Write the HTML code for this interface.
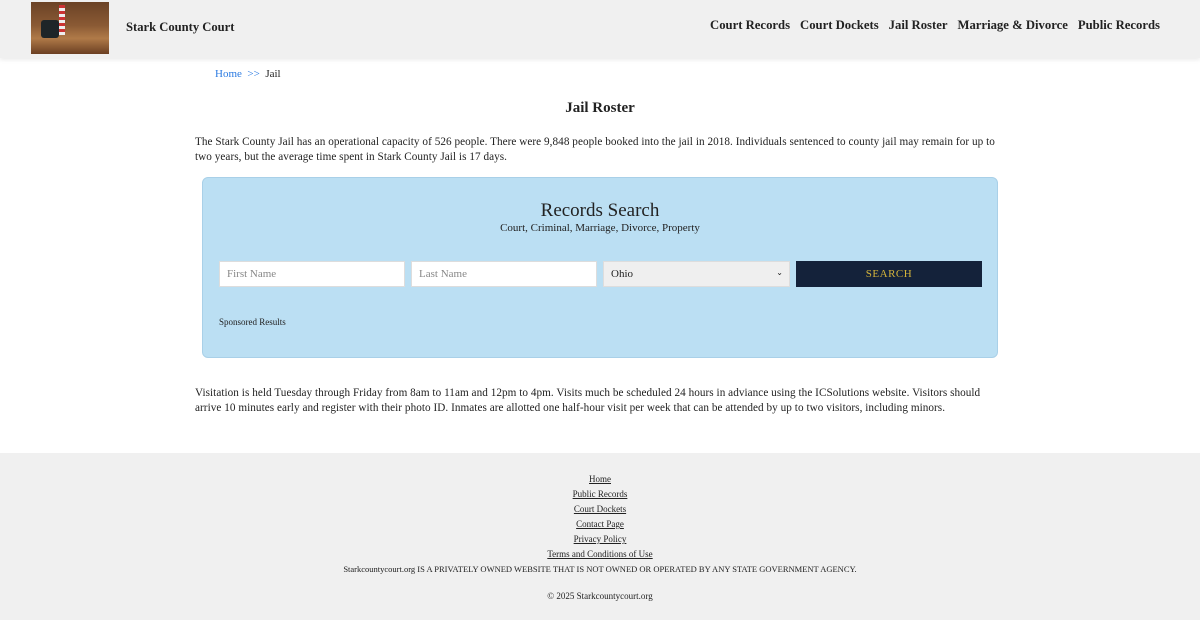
<!DOCTYPE html>
<html><head><meta charset="utf-8"><style>
*{box-sizing:border-box}
body{margin:0;width:1200px;height:620px;overflow:hidden;background:#fff;font-family:"Liberation Serif",serif;color:#222}
.hdr{height:58px;background:#f0f0f0;position:relative;box-shadow:0 2px 4px rgba(0,0,0,.08)}
.logo{position:absolute;left:31px;top:2px;width:78px;height:52px;background:linear-gradient(180deg,#6b4226 0%,#8a5a34 45%,#b07a48 70%,#6b3f22 100%)}
.logo:before{content:"";position:absolute;left:10px;top:18px;width:18px;height:18px;background:#1e2528;border-radius:3px}
.logo:after{content:"";position:absolute;left:28px;top:3px;width:6px;height:30px;background:repeating-linear-gradient(180deg,#c33 0 3px,#eee 3px 6px)}
.title{position:absolute;left:126px;top:20px;font-size:12.6px;font-weight:bold;color:#222}
.nav{position:absolute;right:40px;top:18px;font-size:12.7px;font-weight:bold}
.nav span{margin-left:10px}
.bc{position:absolute;left:215px;top:68px;font-size:11px}
.bc a{color:#2a7ae2;text-decoration:none}
h1{position:absolute;left:0;width:1200px;text-align:center;top:100px;margin:0;font-size:15px}
.p{position:absolute;left:195px;width:810px;font-size:11.2px;line-height:15px;letter-spacing:.05px}
.box{position:absolute;left:202px;top:177px;width:796px;height:181px;background:#bbdff3;border:1px solid #a9d0e8;border-radius:6px}
.box .t{position:absolute;top:22px;width:100%;text-align:center;font-size:19px}
.box .s{position:absolute;top:44px;width:100%;text-align:center;font-size:11px}
.in{position:absolute;top:83px;height:26px;background:#fff;border:1px solid #ddd;font-size:11px;color:#888;padding:6px 7px}
.btn{position:absolute;left:593px;top:83px;width:186px;height:26px;background:#14223a;color:#d4b43a;font-size:11px;text-align:center;line-height:26px;letter-spacing:.5px}
.sp{position:absolute;left:16px;top:139px;font-size:9px}
.ft{position:absolute;top:453px;left:0;width:1200px;height:167px;background:#f0f0f0;text-align:center;font-size:9px}
.ft a{color:#222;display:block;height:15px;line-height:15px;text-decoration:underline}
</style></head><body>
<div class="hdr"><div class="logo"></div><div class="title">Stark County Court</div>
<div class="nav"><span>Court Records</span><span>Court Dockets</span><span>Jail Roster</span><span>Marriage &amp; Divorce</span><span>Public Records</span></div></div>
<div class="bc"><a>Home</a> &nbsp;<a>&gt;&gt;</a>&nbsp; Jail</div>
<h1>Jail Roster</h1>
<div class="p" style="top:135px">The Stark County Jail has an operational capacity of 526 people. There were 9,848 people booked into the jail in 2018. Individuals sentenced to county jail may remain for up to<br>two years, but the average time spent in Stark County Jail is 17 days.</div>
<div class="box"><div class="t">Records Search</div><div class="s">Court, Criminal, Marriage, Divorce, Property</div>
<div class="in" style="left:16px;width:186px">First Name</div>
<div class="in" style="left:208px;width:186px">Last Name</div>
<div class="in" style="left:400px;width:187px;background:#efefef;color:#222">Ohio<span style="position:absolute;right:6px;font-size:8px">&#8964;</span></div>
<div class="btn">SEARCH</div>
<div class="sp">Sponsored Results</div></div>
<div class="p" style="top:386px">Visitation is held Tuesday through Friday from 8am to 11am and 12pm to 4pm. Visits much be scheduled 24 hours in adviance using the ICSolutions website. Visitors should<br>arrive 10 minutes early and register with their photo ID. Inmates are allotted one half-hour visit per week that can be attended by up to two visitors, including minors.</div>
<div class="ft"><div style="height:19px"></div>
<a>Home</a><a>Public Records</a><a>Court Dockets</a><a>Contact Page</a><a>Privacy Policy</a><a>Terms and Conditions of Use</a>
<div style="line-height:15px;font-size:8.5px">Starkcountycourt.org IS A PRIVATELY OWNED WEBSITE THAT IS NOT OWNED OR OPERATED BY ANY STATE GOVERNMENT AGENCY.</div>
<div style="margin-top:14px">© 2025 Starkcountycourt.org</div></div>
</body></html>
